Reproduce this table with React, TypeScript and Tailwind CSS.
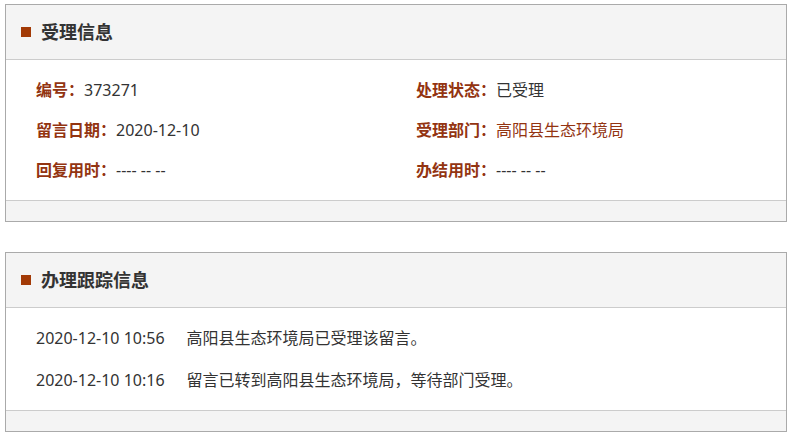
import React from 'react';

const font = "font-['Noto_Sans','Noto_Sans_CJK_SC',sans-serif]";

type Field = { label: string; value: string; link?: boolean };

const fields: Field[] = [
  { label: '编号', value: '373271' },
  { label: '处理状态', value: '已受理' },
  { label: '留言日期', value: '2020-12-10' },
  { label: '受理部门', value: '高阳县生态环境局', link: true },
  { label: '回复用时', value: '---- -- --' },
  { label: '办结用时', value: '---- -- --' },
];

const tracks = [
  { time: '2020-12-10 10:56', text: '高阳县生态环境局已受理该留言。' },
  { time: '2020-12-10 10:16', text: '留言已转到高阳县生态环境局，等待部门受理。' },
];

const Panel: React.FC<{ title: string; children: React.ReactNode }> = ({ title, children }) => (
  <div className="border border-[#aaaaaa] bg-white">
    <div className="h-[55px] bg-[#f4f4f4] border-b border-[#cccccc] flex items-center pl-[15px]">
      <span className="w-[10px] h-[10px] bg-[#a23a06]" />
      <h2 className="ml-[10px] text-[18px] font-bold text-[#333333] leading-none">{title}</h2>
    </div>
    {children}
    <div className="h-[21px] bg-[#f4f4f4] border-t border-[#cccccc]" />
  </div>
);

export default function App() {
  return (
    <div className={`${font} w-[791px] h-[441px] bg-white pt-[4px] pl-[5px] pr-[4px] text-[16px] text-[#333333]`}>
      <Panel title="受理信息">
        <div className="grid grid-cols-[380px_1fr] pl-[30px] py-[10px]">
          {fields.map((f) => (
            <div key={f.label} className="h-[40px] flex items-center">
              <span className="font-bold text-[#933411]">{f.label}：</span>
              <span className={f.link ? 'text-[#933411]' : ''}>{f.value}</span>
            </div>
          ))}
        </div>
      </Panel>

      <div className="mt-[30px]">
        <Panel title="办理跟踪信息">
          <div className="pl-[30px] py-[9px]">
            {tracks.map((t) => (
              <div key={t.time} className="h-[42px] flex items-center">
                <span className="mr-[22px]">{t.time}</span>
                <span>{t.text}</span>
              </div>
            ))}
          </div>
        </Panel>
      </div>
    </div>
  );
}
